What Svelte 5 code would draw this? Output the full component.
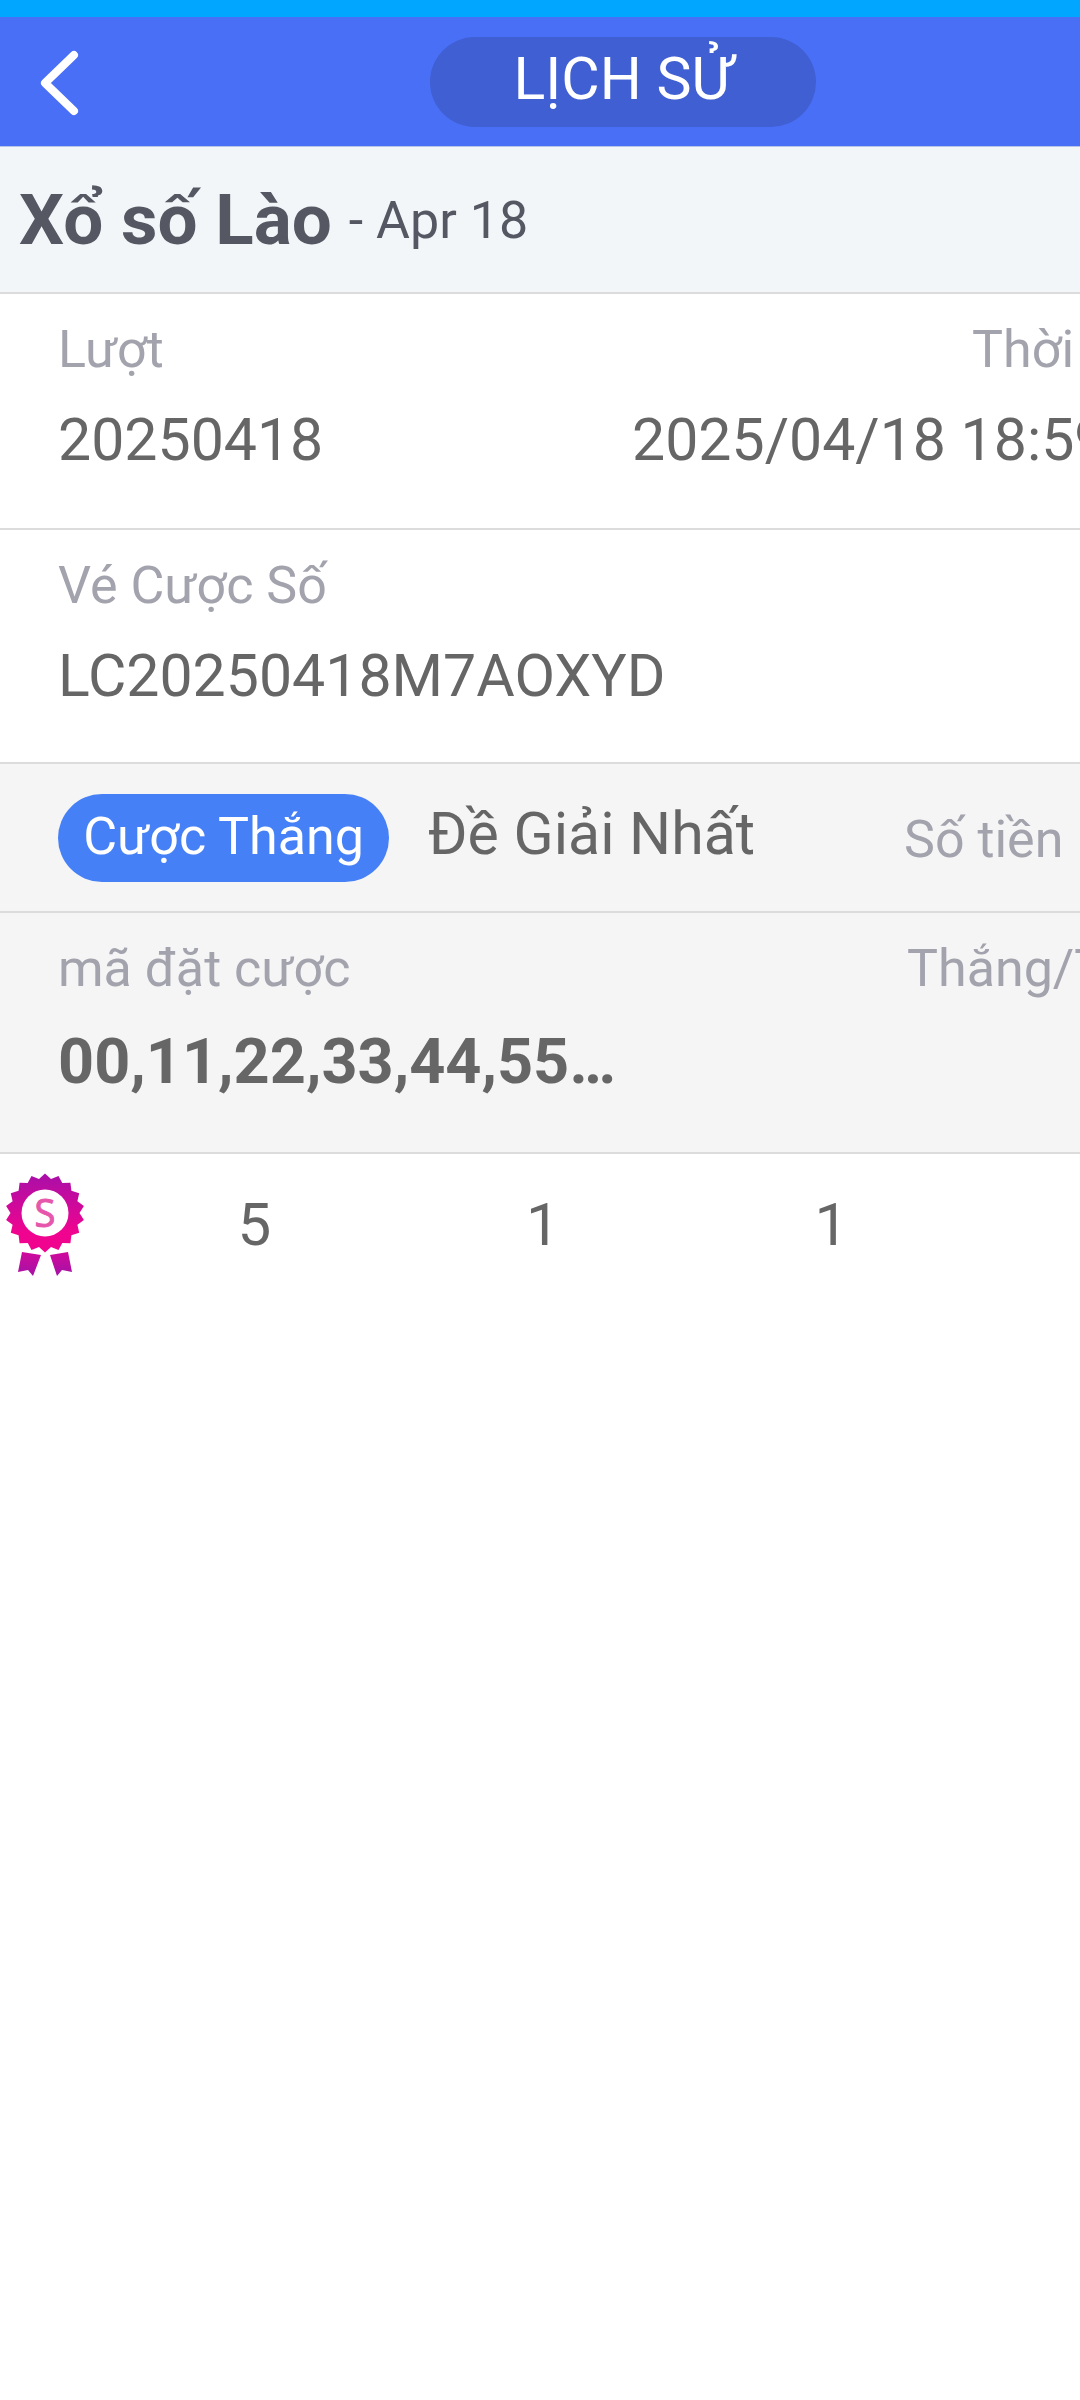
<script lang="ts">
  const balls = ['5', '1', '1'];

  // 18 teeth around the rosette, first one pointing straight up
  const teeth = Array.from({ length: 36 }, (_, i) => {
    const r = i % 2 === 0 ? 39.5 : 34.5;
    const a = (i * 10 - 90) * (Math.PI / 180);
    return `${(45 + r * Math.cos(a)).toFixed(1)},${(43 + r * Math.sin(a)).toFixed(1)}`;
  }).join(' ');
</script>

<div class="screen">
  <main class="page">
    <div class="statusbar"></div>

    <header class="topbar">
      <button class="back" aria-label="Quay lại">
        <svg width="44" height="68" viewBox="0 0 44 68" fill="none">
          <path d="M38 7 L9 35 L38 63" stroke="#fff" stroke-width="8" stroke-linecap="round" stroke-linejoin="round" />
        </svg>
      </button>
      <h1 class="title">LỊCH SỬ</h1>
    </header>

    <section class="heading">
      <strong>Xổ số Lào</strong><span>- Apr 18</span>
    </section>

    <section class="row row-round">
      <div class="col col-first">
        <div class="label">Lượt</div>
        <div class="value">20250418</div>
      </div>
      <div class="col">
        <div class="label time-label">Thời gian</div>
        <div class="value">2025/04/18 18:59</div>
      </div>
    </section>

    <section class="row row-ticket">
      <div class="col">
        <div class="label">Vé Cược Số</div>
        <div class="value">LC20250418M7AOXYD</div>
      </div>
    </section>

    <section class="row-bet">
      <div class="bet-left">
        <span class="pill">Cược Thắng</span>
        <span class="bet-name">Đề Giải Nhất</span>
      </div>
      <span class="label amount">Số tiền <i>₫</i></span>
    </section>

    <section class="row-code">
      <div class="code-left">
        <div class="label">mã đặt cược</div>
        <div class="value code">00,11,22,33,44,55…</div>
      </div>
      <div class="label">Thắng/Thua</div>
    </section>

    <section class="result">
      <svg class="badge" width="90" height="110" viewBox="0 0 90 110">
        <defs>
          <linearGradient id="rosette" x1="0" y1="0" x2="0" y2="1">
            <stop offset="0" stop-color="#a80fa8" />
            <stop offset="0.75" stop-color="#f0048f" />
          </linearGradient>
          <linearGradient id="tail" x1="0" y1="0" x2="0" y2="1">
            <stop offset="0" stop-color="#d00a9c" />
            <stop offset="1" stop-color="#a412a6" />
          </linearGradient>
        </defs>
        <polygon fill="url(#tail)" points="22,82 41,85 33,106 28,100 18,102" />
        <polygon fill="url(#tail)" points="50,85 68,82 72,102 62,100 57,106" />
        <polygon fill="url(#rosette)" points={teeth} />
        <circle cx="45" cy="43" r="23.5" fill="#fff" />
        <text x="45" y="57" text-anchor="middle" class="badge-s">S</text>
      </svg>
      <div class="nums">
        {#each balls as n}
          <span>{n}</span>
        {/each}
      </div>
    </section>
  </main>
</div>

<style>
  :global(body) {
    margin: 0;
    background: #fff;
  }

  .screen {
    width: 1080px;
    height: 2400px;
    overflow: hidden;
    background: #fff;
  }

  /* the page is wider than the screen, the right part is cut off */
  .page {
    width: 1246px;
    font-family: Roboto, "Liberation Sans", sans-serif;
    white-space: nowrap;
  }

  .statusbar {
    height: 17px;
    background: #00a6ff;
  }

  .topbar {
    position: relative;
    height: 130px;
    background: #4a6ff7;
    display: flex;
    align-items: center;
    justify-content: center;
    border-bottom: 1px solid #b9c6e8;
    box-sizing: border-box;
  }

  .back {
    position: absolute;
    left: 36px;
    top: 31px;
    padding: 0;
    border: 0;
    background: none;
    line-height: 0;
  }

  .title {
    width: 386px;
    height: 90px;
    margin: 0 0 -1px 0;
    border-radius: 45px;
    background: #3f5fd2;
    color: #fff;
    font-size: 59px;
    font-weight: 400;
    line-height: 84px;
    text-align: center;
  }

  .heading {
    height: 147px;
    padding-left: 19px;
    padding-bottom: 1px;
    box-sizing: border-box;
    background: #f3f6f8;
    border-bottom: 2px solid #dcdcdc;
    display: flex;
    align-items: center;
    gap: 17px;
    color: #555863;
  }

  .heading strong {
    font-size: 71px;
    font-weight: 700;
  }

  .heading span {
    font-size: 52px;
    padding-top: 2px;
  }

  .row {
    display: flex;
    padding: 26px 0 0 58px;
    box-sizing: border-box;
    border-bottom: 2px solid #dcdcdc;
  }

  .row-round { height: 236px; }
  .row-ticket { height: 234px; padding-top: 26px; }

  .col-first { width: 574px; }

  .time-label { padding-left: 340px; }

  .label {
    font-size: 52px;
    line-height: 60px;
    color: #a2a3ad;
  }

  .value {
    margin-top: 28px;
    font-size: 59px;
    line-height: 64px;
    color: #666;
  }

  .row-bet {
    height: 149px;
    box-sizing: border-box;
    background: #f5f5f5;
    border-bottom: 2px solid #dcdcdc;
    display: flex;
    align-items: center;
    padding-left: 58px;
  }

  .bet-left {
    width: 846px;
    flex: none;
    display: flex;
    align-items: center;
  }

  .pill {
    width: 331px;
    height: 88px;
    border-radius: 44px;
    background: #4680f7;
    color: #fff;
    font-size: 52px;
    line-height: 86px;
    text-align: center;
    flex: none;
  }

  .bet-name {
    margin-left: 39px;
    margin-top: -8px;
    font-size: 59px;
    color: #666;
  }

  .amount {
    margin-top: 5px;
  }

  .amount i {
    font-style: normal;
    color: #f0524a;
    margin-left: 4px;
  }

  .row-code {
    height: 241px;
    box-sizing: border-box;
    background: #f5f5f5;
    border-bottom: 2px solid #dcdcdc;
    padding: 26px 0 0 58px;
    display: flex;
  }

  .code-left {
    width: 849px;
    flex: none;
  }

  .code {
    font-size: 63px;
    font-weight: 700;
    margin-top: 31px;
  }

  .result {
    display: flex;
    padding-top: 16px;
  }

  .badge {
    flex: none;
  }

  .badge-s {
    font-family: "Open Sans", sans-serif;
    font-size: 38px;
    font-weight: 400;
    fill: #e657ac;
    stroke: #e657ac;
    stroke-width: 1;
  }

  .nums {
    margin-left: 20px;
    padding-top: 20px;
    display: grid;
    grid-template-columns: repeat(3, 288.5px);
    font-size: 60px;
    line-height: 70px;
    color: #666;
    text-align: center;
    height: 70px;
  }
</style>
